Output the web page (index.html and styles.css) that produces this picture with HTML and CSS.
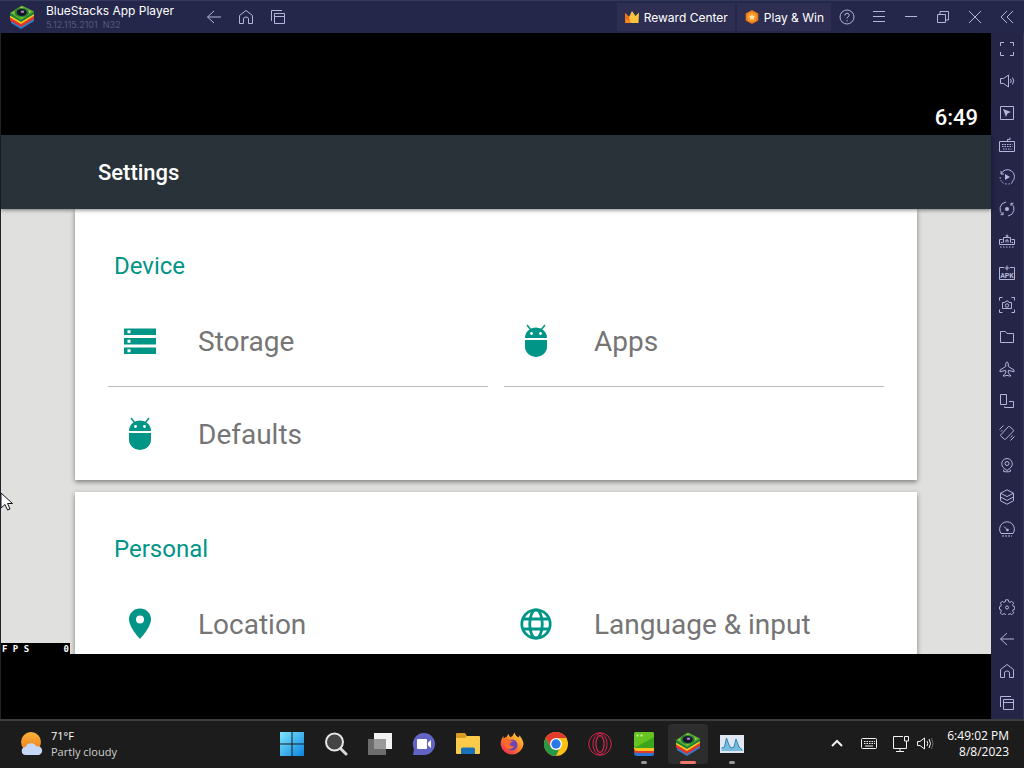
FILE: index.html
```html
<!DOCTYPE html>
<html lang="en">
<head>
<meta charset="UTF-8">
<meta name="viewport" content="width=device-width, initial-scale=1">
<title>BlueStacks App Player</title>
<link rel="stylesheet" href="styles.css">
</head>
<body>

<!-- shared icons -->
<svg class="defs" aria-hidden="true">
  <symbol id="i-back" viewBox="0 0 16 16"><path d="M15 8H1.500M8 2 1.500 8 8 14"/></symbol>
  <symbol id="i-home" viewBox="0 0 16 16"><path d="M1.500 6.500 8 1.500l6.500 5v8h-4v-4.500q0-2-2.500-2t-2.500 2v4.500h-4z"/></symbol>
  <symbol id="i-recent" viewBox="0 0 16 16"><path d="M1.500 12V1.500H12M4.500 4.500h10v10h-10zM4.500 7.500h10"/></symbol>
  <symbol id="i-android" viewBox="0 0 32 36">
    <path d="M5 15a11 10.500 0 0 1 22 0zM5 17h22v6.500a11 10.500 0 0 1-22 0z" fill="#009587"/>
    <path d="m7 2 4 5M25 2l-4 5" stroke="#009587" stroke-width="1.500"/>
    <circle cx="11.500" cy="10.500" r="1.400" fill="#fff"/><circle cx="20.500" cy="10.500" r="1.400" fill="#fff"/>
  </symbol>
  <symbol id="i-stack" viewBox="0 0 26 26">
    <path d="M2 17v2l10 6 13-8v-3l-13 7z" fill="#2a80d2"/>
    <path d="M1 13.500v3L12 23l13-8v-3l-13 7z" fill="#e2342b"/>
    <path d="M1 11.500v2L12 20l13-8v-2l-13 6z" fill="#f9c51d"/>
    <path d="M1 9v2.500L12 18l13-8V7.500L13 14z" fill="#15803a"/>
    <path d="M1 9 12 2q1-.6 2 0l11 5.500L13 15.500q-1 .5-2 0z" fill="#58ae2c"/>
    <path d="M3.500 8.700 12.500 3l9.500 4.700-9.500 6z" fill="#b9d94a"/>
    <ellipse cx="12.700" cy="8.500" rx="7.300" ry="4.500" fill="#2c7a35"/>
    <ellipse cx="12.700" cy="8.500" rx="5" ry="3.400" fill="#14162c"/>
    <ellipse cx="13.500" cy="7.700" rx="1.800" ry="1.200" fill="#9b86b4"/>
  </symbol>
</svg>

<div class="player">
  <header class="titlebar">
    <svg class="logo" viewBox="0 0 26 26"><use href="#i-stack"/></svg>
    <div class="app-name">
      <strong>BlueStacks App Player</strong>
      <small>5.12.115.2101&nbsp; N32</small>
    </div>
    <nav class="titlebar-nav">
      <button class="icon-btn" aria-label="Back"><svg viewBox="0 0 16 16"><use href="#i-back"/></svg></button>
      <button class="icon-btn" aria-label="Home"><svg viewBox="0 0 16 16"><use href="#i-home"/></svg></button>
      <button class="icon-btn" aria-label="Recent apps"><svg viewBox="0 0 16 16"><use href="#i-recent"/></svg></button>
    </nav>
    <div class="promos">
      <a class="promo" href="#">
        <svg viewBox="0 0 16 16"><path d="m1 4 4 4 3-6 3.500 5L15 3.500 14.500 14h-13z" fill="#ffc43c"/><path d="m1 4 4 4 1.500 6h-5z" fill="#f26a1b"/><path d="m1.500 14 .5-4 6 4z" fill="#f58b22"/></svg>
        Reward Center
      </a>
      <a class="promo" href="#">
        <svg viewBox="0 0 16 16"><path d="m8 1 6.300 3.500v7L8 15l-6.300-3.500v-7z" fill="#ee7a16"/><circle cx="8" cy="8" r="4.800" fill="#f9992b"/><path d="m8 5 1 2 2.200.3-1.600 1.500.4 2.200-2-1.100L6 11l.4-2.200-1.600-1.500L7 7z" fill="#ffe7a8"/></svg>
        Play &amp; Win
      </a>
    </div>
    <div class="window-btns">
      <button class="icon-btn" aria-label="Help"><svg viewBox="0 0 16 16"><circle cx="8" cy="8" r="7"/><path d="M5.800 6.500q0-2.300 2.200-2.300t2.200 2q0 1-1.200 1.700T8 9.500M8 11v1.300"/></svg></button>
      <button class="icon-btn" aria-label="Menu"><svg viewBox="0 0 16 16"><path d="M2 2.500h12M2 7.500h12M2 12.500h12"/></svg></button>
      <button class="icon-btn" aria-label="Minimize"><svg viewBox="0 0 16 16"><path d="M2 7.500h12"/></svg></button>
      <button class="icon-btn" aria-label="Restore"><svg viewBox="0 0 16 16"><path d="M2.500 5.500h8v8h-8zM5 5V2.500h8.500V11H11"/></svg></button>
      <button class="icon-btn" aria-label="Close"><svg viewBox="0 0 16 16"><path d="m2 2 12 12M14 2 2 14"/></svg></button>
      <button class="icon-btn" aria-label="Collapse sidebar"><svg viewBox="0 0 16 16"><path d="M8 2 2 8l6 6M14 2 8 8l6 6"/></svg></button>
    </div>
  </header>

  <div class="stage">
    <!-- emulated android screen -->
    <main class="screen">
      <div class="statusbar">6:49</div>
      <h1 class="toolbar">Settings</h1>
      <div class="content">
        <section class="card">
          <h2>Device</h2>
          <div class="tiles">
            <a class="tile" href="#">
              <svg viewBox="0 0 32 36"><path d="M0 5.500h32v6.500H0zM0 15h32v6.500H0zM0 24.500h32V31H0z" fill="#009587"/><path d="M3.500 7.200h3v3h-3zM3.500 16.700h3v3h-3zM3.500 26.200h3v3h-3z" fill="#fff"/></svg>
              Storage
            </a>
            <a class="tile" href="#"><svg viewBox="0 0 32 36"><use href="#i-android"/></svg>Apps</a>
            <a class="tile tile-last" href="#"><svg viewBox="0 0 32 36"><use href="#i-android"/></svg>Defaults</a>
          </div>
        </section>
        <section class="card">
          <h2>Personal</h2>
          <div class="tiles">
            <a class="tile" href="#">
              <svg viewBox="0 0 32 36"><path d="M16 2.500C9.800 2.500 5 7.300 5 13.300 5 21.500 16 33 16 33s11-11.500 11-19.700C27 7.300 22.200 2.500 16 2.500zm0 7a4 4 0 1 1 0 8 4 4 0 0 1 0-8z" fill="#009587"/></svg>
              Location
            </a>
            <a class="tile" href="#">
              <svg viewBox="0 0 32 36"><g fill="none" stroke="#009587" stroke-width="2.800"><circle cx="16" cy="18" r="14.200"/><ellipse cx="16" cy="18" rx="6.300" ry="14.200"/><path d="M3 13h26M3 23h26"/></g></svg>
              Language &amp; input
            </a>
          </div>
        </section>
      </div>
      <div class="fps"><span>F P S</span><span>0</span></div>
      <svg class="cursor" viewBox="0 0 12 20"><path d="M0 1v15l4-3.500L6.500 18l2.500-1-2.500-5.500H11.500z" fill="#fff" stroke="#111"/></svg>
    </main>

    <aside class="sidebar">
      <button class="icon-btn" aria-label="Full screen"><svg viewBox="0 0 16 16"><path d="M1.500 5V1.500H5M11 1.500h3.500V5M14.500 11v3.500H11M5 14.500H1.500V11"/></svg></button>
      <button class="icon-btn" aria-label="Volume"><svg viewBox="0 0 16 16"><path d="M1.500 5.500h3L9.500 2v12l-5-3.500h-3zM11.500 6q1.500 2 0 4M13.500 4.500q2.500 3.500 0 7"/></svg></button>
      <button class="icon-btn" aria-label="Lock cursor"><svg viewBox="0 0 16 16"><path d="M1.500 1.500h13v13h-13z"/><path class="solid" d="m4 4 8 3-3.500 1.500L7 12z"/></svg></button>
      <button class="icon-btn" aria-label="Game controls"><svg viewBox="0 0 16 16"><path d="M.5 4.500h15v10H.5zM8.500 4.500v-2H11V.5"/><path stroke-dasharray="1.500 1" d="M3 7.500h10.500M3 9.500h10.500M4 12h8.500"/></svg></button>
      <button class="icon-btn" aria-label="Sync"><svg viewBox="0 0 16 16"><path d="M2 5A7 7 0 1 1 13 13M2 5V2M2 5h3"/><path stroke-dasharray="1.500 1.500" d="M1 8q1 7 7 7t5-2"/><path class="solid" d="m6 5 5 3-5 3z"/></svg></button>
      <button class="icon-btn" aria-label="Macro recorder"><svg viewBox="0 0 16 16"><path d="M7 1A7 7 0 0 0 4 13.700M9 15A7 7 0 0 0 12 2.300M4 13.700v-2.500M4 13.700H1.500M12 2.300v2.500M12 2.300h2.500"/><circle class="solid" cx="8" cy="8" r="2"/></svg></button>
      <button class="icon-btn" aria-label="Multi-instance"><svg viewBox="0 0 16 16"><path d="M3.500 6.500h-3v5h15v-5h-3M4.500 9.500v-5h7v5M7 9.500V7h2v2.500M8 4.500V1.500M6.500 3h3M2 9.500h1.500M12.500 9.500H14"/><path stroke-dasharray="1.500 1.500" d="M1 14h14"/></svg></button>
      <button class="icon-btn" aria-label="Install APK"><svg viewBox="0 0 16 16"><path d="M5 2.500H.5v12h15v-12H11M8 .5v5M5.500 3h5"/><text class="apk" x="8" y="13" text-anchor="middle">APK</text></svg></button>
      <button class="icon-btn" aria-label="Screenshot"><svg viewBox="0 0 16 16"><path d="M.5 3.500v-3h3M12.500.5h3v3M15.500 12.500v3h-3M3.500 15.500h-3v-3M3.500 5.500H6l1-1.500h2l1 1.500h2.500v6h-9z"/><circle cx="8" cy="8.500" r="1.700"/></svg></button>
      <button class="icon-btn" aria-label="Media folder"><svg viewBox="0 0 16 16"><path d="M1.500 13.500v-11h5l1.500 2h6.500v9z"/></svg></button>
      <button class="icon-btn" aria-label="Airplane mode"><svg viewBox="0 0 16 16"><path d="M8 .8q-1.300.7-1.300 2.200v2.500L1 9v1.800l5.700-1.500v3L4.500 14v1.200L8 14.400l3.500.8V14l-2.200-1.700v-3l5.700 1.500V9L9.300 5.500V3Q9.300 1.500 8 .8z"/></svg></button>
      <button class="icon-btn" aria-label="Rotate"><svg viewBox="0 0 16 16"><path d="M1.500 1.500h6v10h-6zM10 8.500h4.500v6h-9V13.500"/></svg></button>
      <button class="icon-btn" aria-label="Shake"><svg viewBox="0 0 16 16"><path d="M10.500 1.500 14.500 5q.5.500 0 1L6.500 14.300q-.5.500-1 0L1.700 11q-.5-.5 0-1L9.500 1.500q.5-.5 1 0zM.5 4.500l4-4M2 6.500 3.500 5M11.500 15.500l4-4M11.500 12.500l2-2"/></svg></button>
      <button class="icon-btn" aria-label="Set location"><svg viewBox="0 0 16 16"><path d="M5.500 11.500a5.300 5.300 0 1 1 5 0L8 13.500z"/><circle cx="8" cy="6.500" r="2"/><path d="M5 12.500Q3 14.500 6 14.800h4q3-.3 1-2.300"/></svg></button>
      <button class="icon-btn" aria-label="Instance manager"><svg viewBox="0 0 16 16"><path d="m8 .8 6.500 3.400L8 7.600 1.500 4.200zM1.500 4.200v7.600L8 15.200l6.500-3.400V4.200M1.500 8 8 11.400 14.500 8"/></svg></button>
      <button class="icon-btn" aria-label="Performance"><svg viewBox="0 0 16 16"><path d="M2 12.500a7.400 7.400 0 1 1 12 0zM5 5.500 8.500 9"/><circle class="solid" cx="8.500" cy="9" r="1.300"/><path stroke-dasharray="2 1" d="M3 15h10"/></svg></button>

      <button class="icon-btn push" aria-label="Settings"><svg viewBox="0 0 16 16"><path d="M6.700.8h2.600l.4 2 1.400.6 1.700-1.100 1.900 1.900-1.100 1.700.6 1.400 1.500.4v2.600l-1.500.4-.6 1.400 1.100 1.700-1.900 1.900-1.700-1.100-1.400.6-.4 1.500H6.700l-.4-1.500-1.400-.6-1.700 1.100-1.900-1.900 1.100-1.700-.6-1.400-1.300-.4V7.700l1.300-.4.6-1.400-1.100-1.700 1.900-1.900 1.700 1.100 1.400-.6z"/><circle cx="8" cy="8.500" r="1.500"/></svg></button>
      <button class="icon-btn" aria-label="Back"><svg viewBox="0 0 16 16"><use href="#i-back"/></svg></button>
      <button class="icon-btn" aria-label="Home"><svg viewBox="0 0 16 16"><use href="#i-home"/></svg></button>
      <button class="icon-btn" aria-label="Recent apps"><svg viewBox="0 0 16 16"><use href="#i-recent"/></svg></button>
    </aside>
  </div>
</div>

<!-- windows taskbar -->
<footer class="taskbar">
  <a class="weather" href="#">
    <svg viewBox="0 0 24 24"><defs><linearGradient id="sun" x2="0" y2="1"><stop stop-color="#f9b23a"/><stop offset="1" stop-color="#ee7a1a"/></linearGradient></defs><circle cx="11" cy="10" r="10" fill="url(#sun)"/><path d="M6 23a4 4 0 0 1-.5-8 6 6 0 0 1 11-.5A4.400 4.400 0 0 1 19 23z" fill="#c6d8f6"/></svg>
    <span>71°F<br><em>Partly cloudy</em></span>
  </a>

  <nav class="apps">
    <button class="app" aria-label="Start"><svg viewBox="0 0 24 24"><defs><linearGradient id="win" x2="1" y2="1"><stop stop-color="#7fe6fd"/><stop offset="1" stop-color="#0a84e0"/></linearGradient></defs><path d="M0 0h11.500v11.500H0zM12.500 0H24v11.500H12.500zM0 12.500h11.500V24H0zM12.500 12.500H24V24H12.500z" fill="url(#win)"/></svg></button>
    <button class="app" aria-label="Search"><svg viewBox="0 0 24 24"><path d="m16 16 6 6" stroke="#d8d8d8" stroke-width="3" stroke-linecap="round"/><circle cx="10.500" cy="10" r="8.500" fill="#454545" stroke="#e6e6e6" stroke-width="2"/></svg></button>
    <button class="app" aria-label="Task view"><svg viewBox="0 0 24 24"><path d="M6 1h18v16H6z" fill="#f2f2f2"/><path d="M0 7h18v16H0z" fill="#6d6d6d"/><path d="M6 7h12v10H6z" fill="#999"/></svg></button>
    <button class="app" aria-label="Chat"><svg viewBox="0 0 24 24"><path d="M12 1a11 11 0 1 1 0 22H1l1-6A11 11 0 0 1 12 1z" fill="#6264c4"/><path d="M6 7h8q1 0 1 1v8q0 1-1 1H6q-1 0-1-1V8q0-1 1-1zM16 10.500l3-2.500v8l-3-2.500z" fill="#fff"/></svg></button>
    <button class="app" aria-label="File Explorer"><svg viewBox="0 0 24 24"><path d="M0 2q0-1 1-1h8l2 3h12v6H0z" fill="#d99a24"/><path d="M0 6h9l2-2h12q1 0 1 1v16q0 1-1 1H1q-1 0-1-1z" fill="#fccb4a"/><path d="M5 22v-5q0-1.500 1.500-1.500h11Q19 15.500 19 17v5z" fill="#1672b9"/></svg></button>
    <button class="app" aria-label="Firefox"><svg viewBox="0 0 24 24"><defs><linearGradient id="fx" x1="1" x2=".2" y2="1"><stop stop-color="#ffe04a"/><stop offset=".5" stop-color="#ff8a22"/><stop offset="1" stop-color="#ec2653"/></linearGradient></defs><path d="M14.500.5q1 4 4.500 5 .5-1.500 0-2.500 4 4 4.500 9A11.500 11.500 0 0 1 .7 13Q.5 7 3.500 4v2.500Q5 5 6.500 5q.8-2 2.500-3-.2 2 1.500 3.300 2.500-1 4-4.800z" fill="url(#fx)"/><circle cx="12" cy="13" r="5.500" fill="#7043b8"/><path d="M3.500 8q4-3 7 .5 2 0 2.500 1-2.500 1-3.500 3 1.500 2.500 5 1.500-2.500 4-6 3Q4 16 3.500 8z" fill="#f76c2c"/></svg></button>
    <button class="app" aria-label="Chrome"><svg viewBox="0 0 24 24"><circle cx="12" cy="12" r="12" fill="#fbc116"/><path d="M1.600 6 6.800 15 12 18l3-.5L12 24A12 12 0 0 1 1.600 6z" fill="#279847"/><path d="M1.600 6A12 12 0 0 1 22.400 6H12l-5.200 9z" fill="#e33b2e"/><circle cx="12" cy="12" r="6" fill="#fff"/><circle cx="12" cy="12" r="4.700" fill="#2a78e8"/></svg></button>
    <button class="app" aria-label="Opera GX"><svg viewBox="0 0 24 24"><g fill="none" stroke="#d3264e"><circle cx="12" cy="12" r="11.300"/><ellipse cx="12" cy="12" rx="4" ry="8.500" stroke-width="1.300"/><ellipse cx="12" cy="12" rx="7" ry="10.500"/></g></svg></button>
    <button class="app running" aria-label="BlueStacks X"><svg viewBox="0 0 24 24"><path d="M3 19h19v3q0 2-2 2H5q-3 0-3-3z" fill="#2b76d4"/><path d="M2 18h20v3H5q-3 0-3-3z" fill="#e8362e"/><path d="M2 15h20v4H5q-3 0-3-3z" fill="#f7c51f"/><path d="M2 2q0-2 2-2h16q2 0 2 2v14H4q-2 0-2-2z" fill="#3da51d"/><path d="M2 2q0-2 2-2h16q2 0 2 2v3L4 15q-2 0-2-2z" fill="#65c41f"/><path d="M4.500 2.500h2v2h-2zM8.500 2.500h2v2h-2z" fill="#c9f09a"/></svg></button>
    <button class="app active" aria-label="BlueStacks App Player"><svg viewBox="0 0 26 26"><use href="#i-stack"/></svg></button>
    <button class="app running" aria-label="Resource Monitor"><svg viewBox="0 0 24 24"><path d="M0 3h24v18H0z" fill="#dfe8f2"/><path d="M1.500 19v-3l3-1 2-9 2.500 7 2 3 3-1 2-8 3 8 3.500 3v1z" fill="#78bbdd"/><path d="m1.500 16 3-1 2-9 2.500 7 2 3 3-1 2-8 3 8 3.500 3" fill="none" stroke="#3182b4"/></svg></button>
  </nav>

  <div class="tray">
    <button class="tray-btn" aria-label="Show hidden icons"><svg viewBox="0 0 20 20"><path d="m5 12 5-5 5 5" stroke-width="2"/></svg></button>
    <button class="tray-btn" aria-label="Touch keyboard"><svg viewBox="0 0 20 20"><rect x="2.500" y="4.500" width="15" height="10" rx="1"/><path stroke-dasharray="1.500 1" d="M5 7.500h11M5 9.500h11"/><path d="M6 12h8"/></svg></button>
    <button class="tray-btn" aria-label="Network"><svg viewBox="0 0 20 20"><path d="M12 2.500H2.500v12h13V10M9 14.500V18M5 17.500h8M13.500 2.500h4V7h-4zM15.500 7v4"/></svg></button>
    <button class="tray-btn tray-sound" aria-label="Volume"><svg viewBox="0 0 20 20"><path d="M2.500 7.500H5L9.500 4v11L5 11.500H2.500zM12 7q1.500 2.500 0 5M14 5q3 4.500 0 9"/><path d="M16.500 4q3 5.500 0 11" opacity=".35"/></svg></button>
    <time class="clock">6:49:02 PM<br>8/8/2023</time>
  </div>
</footer>

</body>
</html>
```

FILE: styles.css
```css
:root {
  --navy: #25274a;
  --navy-light: #2e2e53;
  --line-icon: #b3b6dc;
  --teal: #009587;
}

* { box-sizing: border-box; }

body {
  margin: 0;
  height: 100vh;
  display: flex;
  flex-direction: column;
  overflow: hidden;
  background: #000;
  font-family: Roboto, "Liberation Sans", sans-serif;
}

h1, h2 { margin: 0; font-weight: 400; }
a { color: inherit; text-decoration: none; }
button { padding: 0; border: 0; background: none; font: inherit; cursor: pointer; }
svg { display: block; flex: none; }
.defs { position: absolute; width: 0; height: 0; }

/* ---------- Player window ---------- */
.player {
  flex: 1;
  min-height: 0;
  display: flex;
  flex-direction: column;
}

.titlebar {
  display: flex;
  align-items: center;
  height: 33px;
  padding: 0 1px 0 9px;
  border-top: 1px solid #34375c;
  background: var(--navy);
  color: #fff;
  font-family: Inter, "Liberation Sans", sans-serif;
  font-size: 12px;
}

.logo { width: 26px; height: 26px; }

.app-name {
  display: flex;
  flex-direction: column;
  width: 152px;
  margin-left: 11px;
  white-space: nowrap;
}
.app-name strong { font-weight: 400; line-height: 15px; }
.app-name small { font-size: 9px; line-height: 13px; color: #555879; }

.titlebar-nav, .window-btns { display: flex; }

.icon-btn {
  display: flex;
  align-items: center;
  justify-content: center;
  width: 32px;
  height: 32px;
}
.icon-btn svg {
  width: 16px;
  height: 16px;
  fill: none;
  stroke: var(--line-icon);
}
.icon-btn .solid { fill: var(--line-icon); stroke: none; }
.icon-btn .apk {
  fill: var(--line-icon);
  stroke: none;
  font: bold 7px Roboto, sans-serif;
}

.promos {
  display: flex;
  gap: 2px;
  height: 28px;
  margin-left: auto;
}
.promo {
  display: flex;
  align-items: center;
  gap: 4px;
  padding: 0 7px;
  background: var(--navy-light);
}
.promo svg { width: 16px; height: 16px; }

.stage {
  flex: 1;
  min-height: 0;
  display: flex;
}

.sidebar {
  display: flex;
  flex-direction: column;
  align-items: center;
  width: 33px;
  border-right: 1px solid #32365c;
  background: #242547;
}
.sidebar .push { margin-top: auto; }

/* ---------- Android screen ---------- */
.screen {
  position: relative;
  flex: 1;
  min-width: 0;
  display: flex;
  flex-direction: column;
  padding-bottom: 65px;
  border-left: 1px solid #20232b;
  background: #000;
}

.statusbar {
  height: 102px;
  padding: 72px 13px 0;
  color: #fff;
  font-size: 22px;
  font-weight: 500;
  line-height: 26px;
  text-align: right;
}

.toolbar {
  position: relative;
  padding: 2px 97px 0;
  background: #293238;
  box-shadow: 0 1px 4px rgba(0, 0, 0, 0.5);
  color: #fff;
  font-size: 22px;
  font-weight: 500;
  line-height: 72px;
}

.content {
  flex: 1;
  min-height: 0;
  overflow: hidden;
  padding: 0 74px;
  background: #e0e0de;
}

.card {
  margin-bottom: 12px;
  padding: 29px 33px 0;
  background: #fff;
  box-shadow: 0 2px 5px rgba(0, 0, 0, 0.45);
}
.card h2 {
  padding: 0 6px;
  color: var(--teal);
  font-size: 24px;
  line-height: 56px;
}

.tiles {
  display: grid;
  grid-template-columns: 1fr 1fr;
  column-gap: 16px;
}
.tile {
  display: flex;
  align-items: center;
  gap: 42px;
  height: 93px;
  padding: 3px 16px 0;
  border-bottom: 1px solid #bdbdbd;
  color: #757575;
  font-size: 28px;
}
.tile svg {
  width: 32px;
  height: 36px;
  margin-bottom: 2px;
}
.tile-last { border-color: transparent; }

.fps {
  position: absolute;
  left: 0;
  bottom: 64px;
  display: flex;
  justify-content: space-between;
  width: 69px;
  padding: 0 1px;
  background: #000;
  color: #fff;
  font: bold 9px/12px "DejaVu Sans Mono", monospace;
}

.cursor {
  position: absolute;
  left: 0;
  top: 459px;
  width: 12px;
  height: 20px;
}

/* ---------- Taskbar ---------- */
.taskbar {
  display: grid;
  grid-template-columns: 1fr auto 1fr;
  align-items: center;
  height: 49px;
  padding-bottom: 1px;
  border-top: 2px solid #3d3d3d;
  background: #1c1c1c;
  color: #fff;
  font: 12px/16px "Open Sans", "Noto Sans", sans-serif;
}

.weather {
  display: flex;
  align-items: center;
  gap: 7px;
  padding-left: 20px;
}
.weather svg { width: 24px; height: 24px; }
.weather span { font-size: 11px; }
.weather em { color: #d0d0d0; font-style: normal; }

.apps { display: flex; gap: 4px; }
.app {
  position: relative;
  display: flex;
  align-items: center;
  justify-content: center;
  width: 40px;
  height: 40px;
  border-radius: 4px;
}
.app svg { width: 24px; height: 24px; }
.app.active { background: #2d2d2d; }
.app.active svg { width: 26px; height: 26px; }
.app.running::after,
.app.active::after {
  content: "";
  position: absolute;
  bottom: 0;
  width: 6px;
  height: 3px;
  border-radius: 2px;
  background: #9a9a9a;
}
.app.active::after { width: 16px; background: #f0776b; }

.tray {
  display: flex;
  align-items: center;
  justify-content: flex-end;
  padding-right: 15px;
}
.tray-btn { display: flex; justify-content: center; width: 32px; }
.tray-btn svg {
  width: 20px;
  height: 20px;
  fill: none;
  stroke: #f2f2f2;
}
.tray-sound { width: 16px; }
.clock {
  width: 76px;
  text-align: right;
}
```
